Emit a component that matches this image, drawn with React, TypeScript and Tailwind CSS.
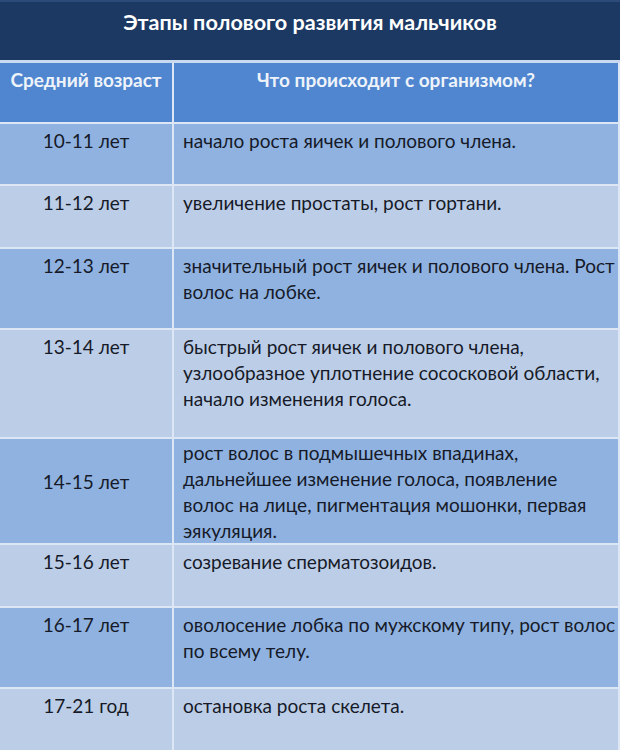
import React from "react";

const rows: { age: string; text: string[]; h: number; dark: boolean; agePt?: number; textPt?: number }[] = [
  { age: "10-11 лет", text: ["начало роста яичек и полового члена."], h: 60, dark: true },
  { age: "11-12 лет", text: ["увеличение простаты, рост гортани."], h: 61, dark: false },
  { age: "12-13 лет", text: ["значительный рост яичек и полового члена. Рост", "волос на лобке."], h: 79, dark: true },
  { age: "13-14 лет", text: ["быстрый рост яичек и полового члена,", "узлообразное уплотнение сососковой области,", "начало изменения голоса."], h: 107, dark: false },
  { age: "14-15 лет", text: ["рост волос в подмышечных впадинах,", "дальнейшее изменение голоса, появление", "волос на лице, пигментация мошонки, первая", "эякуляция."], h: 104, dark: true, agePt: 26, textPt: 1 },
  { age: "15-16 лет", text: ["созревание сперматозоидов."], h: 61, dark: false },
  { age: "16-17 лет", text: ["оволосение лобка по мужскому типу, рост волос", "по всему телу."], h: 79, dark: true },
  { age: "17-21 год", text: ["остановка роста скелета."], h: 61, dark: false },
];

export default function App() {
  return (
    <div className="w-[620px] h-[750px] overflow-hidden bg-[#dce6f4]" style={{ fontFamily: "Lato, 'Open Sans', sans-serif" }}>
      <div className="h-[60px] bg-[#1c3963] border-t-2 border-[#2c4b78] flex justify-center pt-[7px]">
        <span className="text-white font-bold text-[21.6px] leading-[26px]">Этапы полового развития мальчиков</span>
      </div>
      <div className="h-[3px] bg-[#c9daf0]" />
      <div className="grid grid-cols-[172px_444px] gap-x-[2px] gap-y-[2px] pr-[2px]">
        <div className="h-[59px] bg-[#4f86cf] text-[#eef3fa] font-bold text-[19px] leading-[26px] pt-[4px] text-center">Средний возраст</div>
        <div className="h-[59px] bg-[#4f86cf] text-[#eef3fa] font-bold text-[19px] leading-[26px] pt-[4px] text-center">Что происходит с организмом?</div>
        {rows.map((r) => (
          <React.Fragment key={r.age}>
            <div
              className={`${r.dark ? "bg-[#8fb2e1]" : "bg-[#bccde7]"} text-[#161a28] text-[19px] leading-[26px] text-center`}
              style={{ height: r.h, paddingTop: r.agePt ? 4 + r.agePt : 4 }}
            >
              {r.age}
            </div>
            <div
              className={`${r.dark ? "bg-[#8fb2e1]" : "bg-[#bccde7]"} text-[#161a28] text-[19px] leading-[26px] pl-[9px]`}
              style={{ height: r.h, paddingTop: r.textPt ?? 4 }}
            >
              {r.text.map((t, i) => (
                <div key={i} className="whitespace-nowrap">{t}</div>
              ))}
            </div>
          </React.Fragment>
        ))}
      </div>
    </div>
  );
}
